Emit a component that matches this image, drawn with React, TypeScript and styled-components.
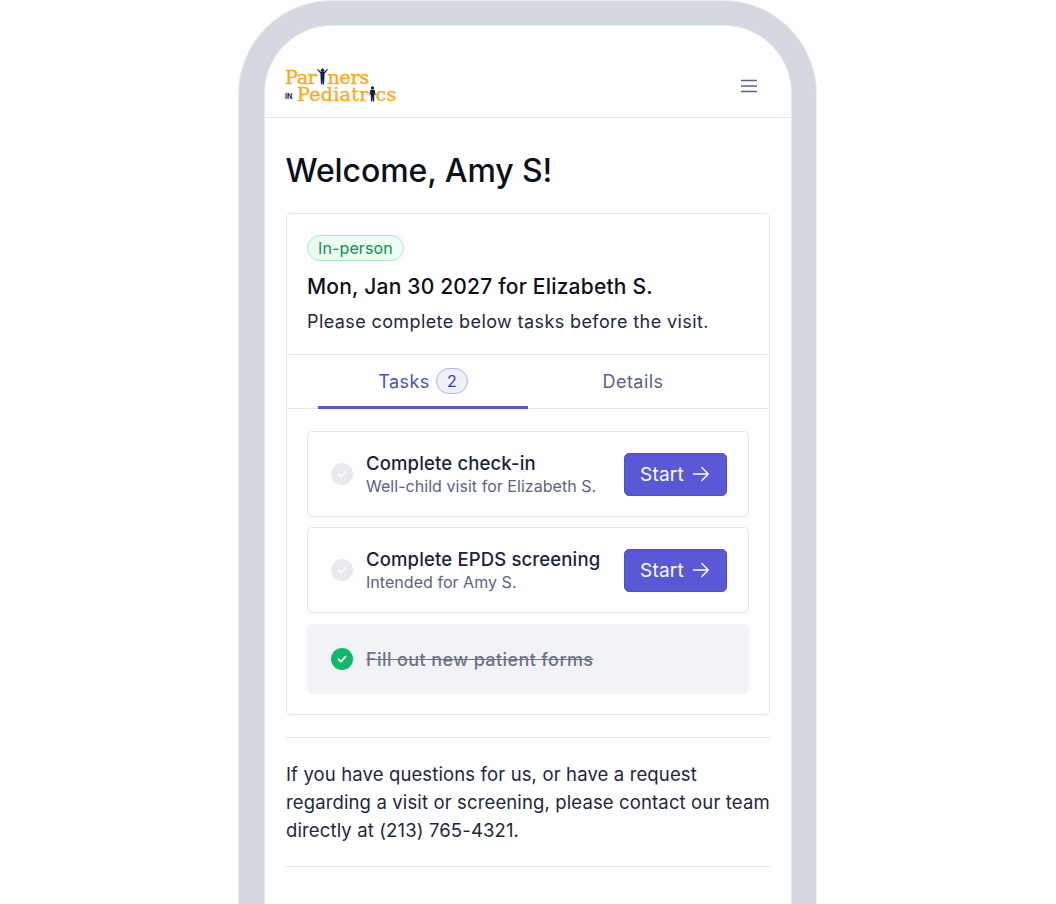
import React from "react";
import styled, { createGlobalStyle } from "styled-components";

const Global = createGlobalStyle`
  html, body { margin: 0; padding: 0; background: #fff; height: 904px; overflow: hidden; }
  body { font-family: Inter, "Liberation Sans", sans-serif; }
`;

const Stage = styled.div`
  width: 1056px;
  height: 904px;
  overflow: hidden;
  padding-left: 238px;
  box-sizing: border-box;
`;
const Outline = styled.div`
  width: 579px;
  height: 904px;
  box-sizing: border-box;
  border: 1px solid #e9ebef;
  border-bottom: none;
  border-radius: 94px 94px 0 0;
  background: #d5d8e0;
  padding: 24px 24px 0 25px;
`;
const Screen = styled.div`
  height: 880px;
  background: #fff;
  border: 1px solid #e5e7ee;
  border-bottom: none;
  border-radius: 68px 68px 0 0;
  box-sizing: border-box;
`;
const Header = styled.header`
  height: 92px;
  box-sizing: border-box;
  border-bottom: 1px solid #e5e7eb;
  padding: 43px 33px 0 20px;
  display: flex;
  justify-content: space-between;
`;
const Logo = styled.div`
  font-family: "DejaVu Serif", serif;
  font-weight: 400;
  color: #fcaa14;
  display: flex;
  flex-direction: column;
  font-size: 19px;
  -webkit-text-stroke: 0.35px #fcaa14;
`;
const LogoLine = styled.div<{ $spacing: number }>`
  display: flex;
  align-items: flex-end;
  height: 17px;
  line-height: 17px;
  letter-spacing: ${(p) => p.$spacing}px;
`;
const LogoIn = styled.span`
  font-family: Inter, sans-serif;
  font-weight: 700;
  font-size: 7px;
  letter-spacing: 0;
  -webkit-text-stroke: 0;
  color: #141c4a;
  line-height: 12px;
  width: 12px;
`;
const Figure = styled.svg`
  display: block;
  margin-bottom: 1px;
  flex: none;
`;
const Menu = styled.svg`
  display: block;
  margin-top: 10px;
`;
const Main = styled.main`
  padding: 0 21px;
`;
const Title = styled.h1`
  margin: 33px 0 22px;
  font-size: 32px;
  line-height: 40px;
  font-weight: 500;
  letter-spacing: -0.1px;
  text-indent: -0.5px;
  color: #0b1020;
`;
const Card = styled.section`
  border: 1px solid #e5e7eb;
  border-radius: 5px;
  height: 502px;
  box-sizing: border-box;
`;
const Summary = styled.div`
  padding: 21px 20px 0;
  height: 141px;
  box-sizing: border-box;
  border-bottom: 1px solid #e5e7eb;
`;
const Badge = styled.span`
  display: inline-block;
  box-sizing: border-box;
  height: 26px;
  line-height: 24px;
  padding: 0 10px;
  border: 1px solid #a4ecc0;
  border-radius: 13px;
  background: #ecfdf3;
  color: #08934f;
  font-size: 16px;
  letter-spacing: 0.12px;
  vertical-align: top;
`;
const DateLine = styled.div`
  margin-top: 11px;
  font-size: 21px;
  line-height: 30px;
  font-weight: 500;
  letter-spacing: 0.2px;
  color: #0b1020;
`;
const Note = styled.div`
  margin-top: 6px;
  font-size: 18px;
  line-height: 28px;
  letter-spacing: 0.4px;
  color: #1d2741;
`;
const Tabs = styled.div`
  height: 54px;
  box-sizing: border-box;
  border-bottom: 1px solid #e5e7eb;
  padding: 0 31px;
  display: flex;
`;
const Tab = styled.div<{ $active?: boolean }>`
  width: 210px;
  height: 54px;
  box-sizing: border-box;
  display: flex;
  align-items: center;
  justify-content: center;
  gap: 6px;
  padding-top: 1px;
  font-size: 18px;
  letter-spacing: 0.45px;
  color: ${(p) => (p.$active ? "#4a4ccf" : "#5a6480")};
  border-bottom: 3px solid ${(p) => (p.$active ? "#5a58d6" : "transparent")};
`;
const Count = styled.span`
  width: 32px;
  height: 26px;
  box-sizing: border-box;
  border: 1px solid #a9b7f3;
  background: #eef1fd;
  border-radius: 13px;
  font-size: 16px;
  letter-spacing: 0;
  display: flex;
  align-items: center;
  justify-content: center;
  color: #3437b0;
`;
const TaskList = styled.div`
  padding: 22px 20px 0;
  display: flex;
  flex-direction: column;
  gap: 10px;
`;
const Task = styled.div`
  height: 86px;
  box-sizing: border-box;
  border: 1px solid #e5e7eb;
  border-radius: 5px;
  padding: 0 21px 0 23px;
  display: flex;
  align-items: center;
`;
const DoneTask = styled.div`
  height: 70px;
  margin-top: 1px;
  box-sizing: border-box;
  background: #f2f3f7;
  border-radius: 5px;
  padding: 0 24px;
  display: flex;
  align-items: center;
`;
const Check = styled.span<{ $done?: boolean }>`
  width: 22px;
  height: 22px;
  border-radius: 50%;
  flex: none;
  background: ${(p) => (p.$done ? "#12b76a" : "#e9eaef")};
  display: flex;
  align-items: center;
  justify-content: center;
`;
const TaskText = styled.div`
  flex: 1;
  margin-left: 13px;
`;
const TaskTitle = styled.div`
  font-size: 18.5px;
  line-height: 24px;
  font-weight: 500;
  letter-spacing: 0.15px;
  color: #1a2340;
`;
const TaskSub = styled.div`
  font-size: 16px;
  line-height: 22px;
  letter-spacing: 0.04px;
  color: #5a6480;
`;
const Struck = styled.div`
  margin-left: 13px;
  font-size: 18px;
  font-weight: 500;
  letter-spacing: 0.4px;
  color: #6b7385;
  text-decoration: line-through;
`;
const StartButton = styled.button`
  width: 103px;
  height: 43px;
  box-sizing: border-box;
  border: 1px solid #4f4fd0;
  border-radius: 5px;
  background: #5a58d6;
  color: #fff;
  font: 400 19px Inter, sans-serif;
  letter-spacing: 0.2px;
  display: flex;
  align-items: center;
  justify-content: center;
  gap: 8px;
  padding: 0 1px 0 0;
`;
const Footer = styled.div`
  margin-top: 22px;
  border-top: 1px solid #e5e7eb;
  border-bottom: 1px solid #e5e7eb;
  height: 130px;
  box-sizing: border-box;
  padding-top: 22px;
  font-size: 18.5px;
  line-height: 28px;
  letter-spacing: 0.13px;
  color: #1d2741;
`;

const PersonArms = () => (
  <Figure width="11" height="17" viewBox="0 0 11 17" fill="#141c4a">
    <circle cx="5.5" cy="2.2" r="1.7" />
    <path d="M0 1.6 L0.7 1 L3.8 3.8 H7.2 L10.3 1 L11 1.6 L7.6 5.6 L7.4 10 L7 16.5 H5.8 L5.5 11 L5.2 16.5 H4 L3.6 10 L3.4 5.6 Z" />
  </Figure>
);

const PersonStanding = () => (
  <Figure width="7" height="16" viewBox="0 0 7 17" fill="#141c4a">
    <circle cx="3.5" cy="2" r="1.7" />
    <path d="M1.2 4 H5.8 L6.8 9.5 L5.7 9.7 L5.3 7 V16.5 H3.9 L3.6 11 L3.2 16.5 H1.8 V7 L1.3 9.7 L0.2 9.5 Z" />
  </Figure>
);

const CheckMark = () => (
  <svg width="12" height="12" viewBox="0 0 12 12" fill="none" stroke="#fff" strokeWidth="1.8" strokeLinecap="round" strokeLinejoin="round">
    <path d="M2.5 6.3 L5 8.7 L9.5 3.6" />
  </svg>
);

const Arrow = () => (
  <svg width="18" height="18" viewBox="0 0 18 18" fill="none" stroke="#fff" strokeWidth="1.4" strokeLinecap="round" strokeLinejoin="round">
    <path d="M1.5 9 H16 M9.8 2.5 L16.3 9 L9.8 15.5" />
  </svg>
);

const tasks = [
  { title: "Complete check-in", sub: "Well-child visit for Elizabeth S." },
  { title: "Complete EPDS screening", sub: "Intended for Amy S." },
];

export default function App() {
  return (
    <Stage>
      <Global />
      <Outline>
        <Screen>
          <Header>
            <Logo>
              <LogoLine $spacing={-0.25}>
                Par<PersonArms />ners
              </LogoLine>
              <LogoLine $spacing={0.3}>
                <LogoIn>IN</LogoIn>Pediatr<PersonStanding />cs
              </LogoLine>
            </Logo>
            <Menu width="18" height="14" viewBox="0 0 18 14" fill="none" stroke="#5a6480" strokeWidth="1.4">
              <path d="M1 1.5 H17 M1 7 H17 M1 12.5 H17" />
            </Menu>
          </Header>
          <Main>
            <Title>Welcome, Amy S!</Title>
            <Card>
              <Summary>
                <Badge>In-person</Badge>
                <DateLine>Mon, Jan 30 2027 for Elizabeth S.</DateLine>
                <Note>Please complete below tasks before the visit.</Note>
              </Summary>
              <Tabs>
                <Tab $active>
                  Tasks <Count>2</Count>
                </Tab>
                <Tab>Details</Tab>
              </Tabs>
              <TaskList>
                {tasks.map((t) => (
                  <Task key={t.title}>
                    <Check>
                      <CheckMark />
                    </Check>
                    <TaskText>
                      <TaskTitle>{t.title}</TaskTitle>
                      <TaskSub>{t.sub}</TaskSub>
                    </TaskText>
                    <StartButton>
                      Start <Arrow />
                    </StartButton>
                  </Task>
                ))}
                <DoneTask>
                  <Check $done>
                    <CheckMark />
                  </Check>
                  <Struck>Fill out new patient forms</Struck>
                </DoneTask>
              </TaskList>
            </Card>
            <Footer>
              If you have questions for us, or have a request regarding a visit or screening, please contact our team directly at (213) 765-4321.
            </Footer>
          </Main>
        </Screen>
      </Outline>
    </Stage>
  );
}
